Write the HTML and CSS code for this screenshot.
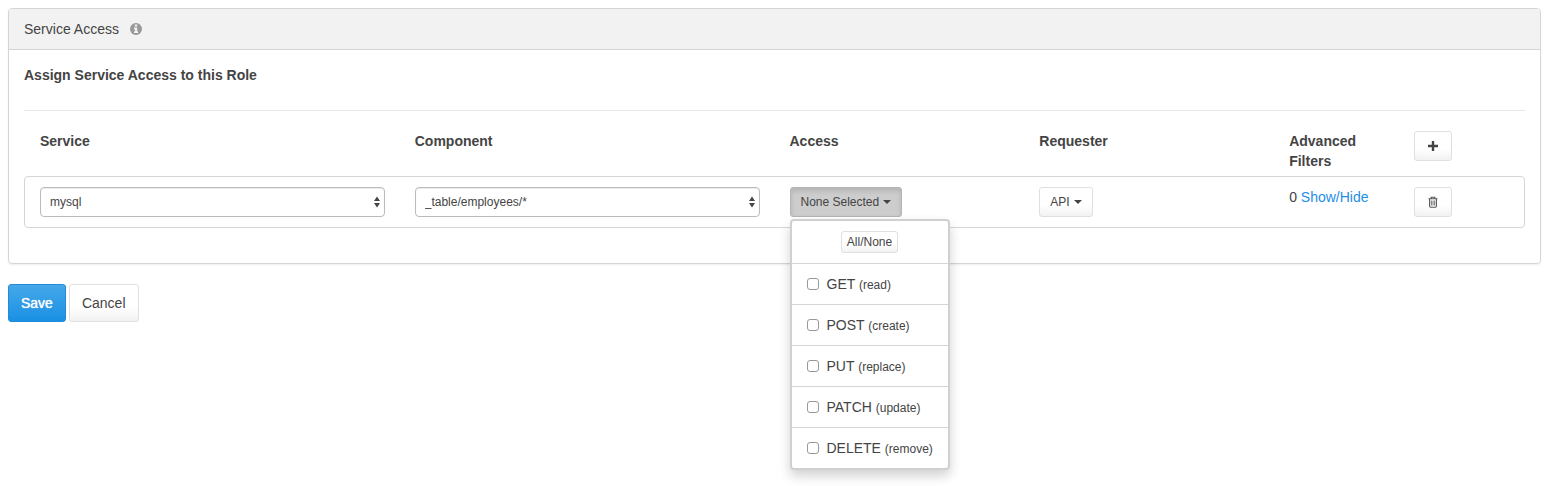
FILE: index.html
```
<!DOCTYPE html>
<html lang="en">
<head>
<meta charset="utf-8">
<meta name="viewport" content="width=device-width, initial-scale=1">
<title>Service Access</title>
<link rel="stylesheet" href="styles.css">
</head>
<body>
<form class="page">
  <section class="panel">
    <header class="panel-heading">
      <span>Service Access</span>
      <svg class="info-icon" viewBox="0 0 12 12" aria-hidden="true"><circle cx="6" cy="6" r="6" fill="#999"/><path d="M4.8 1.5h2.4v2H4.8zM4 4.6h3.2v3.8h1v1.7H3.9V8.4h1V6.2H4z" fill="#f2f2f2"/></svg>
    </header>
    <div class="panel-body">
      <h4 class="title">Assign Service Access to this Role</h4>
      <hr class="divider">
      <div class="grid grid-head">
        <label for="service">Service</label>
        <label for="component">Component</label>
        <strong>Access</strong>
        <strong>Requester</strong>
        <strong>Advanced Filters</strong>
        <div>
          <button type="button" class="btn btn-sm" aria-label="Add">
            <svg class="icon" viewBox="0 0 12 12" aria-hidden="true"><path d="M4.8 1h2.4v3.8H11v2.4H7.2V11H4.8V7.2H1V4.8h3.8z" fill="#444"/></svg>
          </button>
        </div>
      </div>
      <div class="grid grid-row">
        <div class="select-wrap">
          <select id="service" class="select"><option>mysql</option></select>
          <svg class="arrows" viewBox="0 0 6 12" aria-hidden="true"><path d="M3 0.5L6 5H0zM0 7h6L3 11.5z" fill="#444"/></svg>
        </div>
        <div class="select-wrap">
          <select id="component" class="select"><option>_table/employees/*</option></select>
          <svg class="arrows" viewBox="0 0 6 12" aria-hidden="true"><path d="M3 0.5L6 5H0zM0 7h6L3 11.5z" fill="#444"/></svg>
        </div>
        <div class="dropdown">
          <button type="button" class="btn btn-sm btn-active" aria-expanded="true">None Selected <span class="caret"></span></button>
          <ul class="menu">
            <li class="menu-top"><button type="button" class="btn btn-xs">All/None</button></li>
            <li><label class="option"><input type="checkbox" class="check"><span>GET <small>(read)</small></span></label></li>
            <li><label class="option"><input type="checkbox" class="check"><span>POST <small>(create)</small></span></label></li>
            <li><label class="option"><input type="checkbox" class="check"><span>PUT <small>(replace)</small></span></label></li>
            <li><label class="option"><input type="checkbox" class="check"><span>PATCH <small>(update)</small></span></label></li>
            <li><label class="option"><input type="checkbox" class="check"><span>DELETE <small>(remove)</small></span></label></li>
          </ul>
        </div>
        <div><button type="button" class="btn btn-sm">API <span class="caret"></span></button></div>
        <div class="filters">0 <a href="#filters">Show/Hide</a></div>
        <div>
          <button type="button" class="btn btn-sm" aria-label="Delete">
            <svg class="icon" viewBox="0 0 12 12" aria-hidden="true" fill="none" stroke="#555"><path d="M1.5 2.7h9M4.2 2.5V1.2h3.6v1.3M2.6 3v7.1q0 1.1 1 1.1h4.8q1 0 1-1.1V3" stroke-width="1.1"/><path d="M4.4 4.5v5M6 4.5v5M7.6 4.5v5" stroke-width="0.8"/></svg>
          </button>
        </div>
      </div>
    </div>
  </section>
  <div class="actions">
    <button type="submit" class="btn btn-primary">Save</button>
    <button type="button" class="btn">Cancel</button>
  </div>
</form>
</body>
</html>
```
FILE: styles.css
```
*, *::before, *::after {
  box-sizing: border-box;
}

body {
  margin: 0;
  background: #fff;
  color: #444;
  font: 14px/20px "Liberation Sans", Arial, sans-serif;
}

.page {
  min-height: 100vh;
  padding: 8px 9px 8px 8px;
}

.panel {
  border: 1px solid #d5d5d5;
  border-radius: 4px;
  box-shadow: 0 1px 2px rgba(0, 0, 0, 0.07);
}

.panel-heading {
  display: flex;
  align-items: center;
  gap: 11px;
  padding: 10px 15px;
  border-bottom: 1px solid #d5d5d5;
  border-radius: 3px 3px 0 0;
  background: #f2f2f2;
}

.info-icon {
  width: 12px;
  height: 12px;
}

.panel-body {
  padding: 15px 15px 35px;
}

.title {
  margin: 0;
  font-size: 14px;
}

.divider {
  margin: 25px 0 20px;
  border: 0;
  border-top: 1px solid #e8e8e8;
}

.grid {
  display: grid;
  grid-template-columns: 3fr 3fr 2fr 2fr 1fr 1fr;
  border: 1px solid transparent;
}

.grid > * {
  min-width: 0;
  margin: 0 15px;
}

.grid-head {
  border-width: 0 1px;
  padding-bottom: 5px;
  font-weight: bold;
}

.grid-row {
  padding: 10px 0;
  border-color: #d5d5d5;
  border-radius: 4px;
}

.select-wrap,
.dropdown {
  position: relative;
}

.select {
  display: block;
  width: 100%;
  height: 30px;
  padding: 0 20px 0 9px;
  appearance: none;
  border: 1px solid #bbb;
  border-radius: 4px;
  background: #fff;
  box-shadow: inset 0 1px 1px rgba(0, 0, 0, 0.08);
  color: #444;
  font: inherit;
  font-size: 12px;
}

.arrows {
  position: absolute;
  top: 9px;
  right: 5px;
  width: 6px;
  height: 12px;
  pointer-events: none;
}

.btn {
  display: inline-flex;
  align-items: center;
  justify-content: center;
  gap: 4px;
  padding: 8px 12px;
  border: 1px solid #e0e0e0;
  border-radius: 3px;
  background: linear-gradient(#fff, #fff 60%, #f2f2f2);
  color: #444;
  font: inherit;
}

.btn-sm {
  height: 30px;
  padding: 0 10px;
  font-size: 12px;
}

.btn-xs {
  height: 22px;
  padding: 0 5px;
  font-size: 12px;
}

.btn-active {
  border-color: #b5b5b5;
  background: #cdcdcd;
  box-shadow: inset 0 3px 5px rgba(0, 0, 0, 0.125);
}

.btn-primary {
  border-color: #1f8ddb;
  background: linear-gradient(#46a8e9, #1990e4);
  color: #fff;
  text-shadow: 0 0 1px #fff;
}

.icon {
  width: 12px;
  height: 12px;
  margin: 0 2px;
}

.caret {
  border-top: 4px solid #444;
  border-right: 4px solid transparent;
  border-left: 4px solid transparent;
}

.menu {
  position: absolute;
  top: 100%;
  left: 0;
  z-index: 1;
  width: 160px;
  margin: 2px 0 0;
  padding: 0;
  border: 2px solid #d0d0d0;
  border-radius: 4px;
  background: #fff;
  box-shadow: 0 6px 12px rgba(0, 0, 0, 0.18);
  list-style: none;
}

.menu li + li {
  border-top: 1px solid #d5d5d5;
}

.menu-top {
  display: flex;
  justify-content: center;
  padding: 10px;
}

.option {
  display: flex;
  align-items: center;
  gap: 8px;
  padding: 10px 15px;
  white-space: nowrap;
}

.option small {
  font-size: 12px;
  line-height: 12px;
}

.check {
  flex: none;
  width: 12px;
  height: 12px;
  margin: 0;
  appearance: none;
  border: 1px solid #999;
  border-radius: 3px;
  background: #fff;
}

.check:checked {
  background: #1990e4;
}

.filters a {
  color: #1f8ee6;
  text-decoration: none;
}

.actions {
  display: flex;
  gap: 3px;
  margin-top: 20px;
}
```
